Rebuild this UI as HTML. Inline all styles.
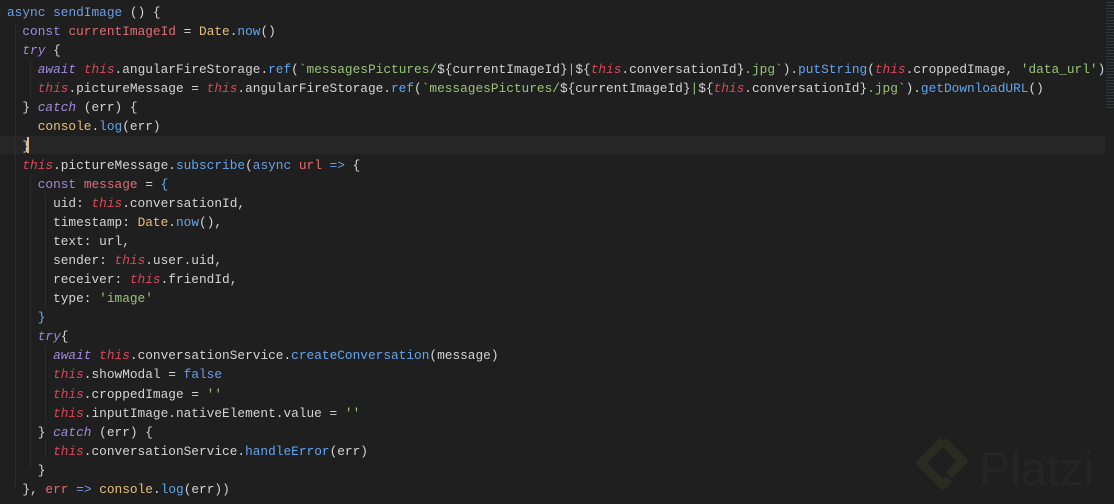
<html><head><style>
body{margin:0;background:#1f1f1f;width:1114px;height:504px;overflow:hidden;position:relative}
pre{margin:0;padding:3px 0 0 7px;font-family:"Liberation Mono",monospace;font-size:12.8px;line-height:19.08px;color:#d4d4d4;position:relative;z-index:2}
.k{color:#a08bdc}.a{color:#6c9fe6}.t{color:#d8475a;font-style:italic}.i{color:#a08bdc;font-style:italic}.v{color:#e06c75}.c{color:#e5c07b}.f{color:#61a6ef}.s{color:#98c379}.b{color:#61afef}.p{color:#d4d4d4}
.hl{position:absolute;left:0;top:136px;width:1105px;height:18px;background:#262626;z-index:1}
.cur{position:absolute;left:27px;top:137px;width:2px;height:16px;background:#e5c07b;z-index:3}
.mm{position:absolute;left:1106px;top:0;width:8px;height:110px;z-index:1;background:repeating-linear-gradient(#1f1f1f 0 2px,#33363c 2px 3px)}
.g{position:absolute;width:1px;background:#2c2c2c;z-index:1}
.logo{position:absolute;left:915px;top:437px;z-index:1}
.pl{position:absolute;left:979px;top:441px;font:47px "Liberation Sans",sans-serif;color:#252525;z-index:1}
</style></head><body>
<div class="hl"></div><div class="cur"></div><div class="mm"></div>
<div class="g" style="left:15px;top:22px;height:465px"></div>
<div class="g" style="left:30px;top:60px;height:38px"></div>
<div class="g" style="left:30px;top:174px;height:295px"></div>
<div class="g" style="left:45px;top:193px;height:115px"></div>
<div class="g" style="left:45px;top:345px;height:76px"></div>
<div class="g" style="left:45px;top:440px;height:19px"></div>
<svg class="logo" width="60" height="62" viewBox="0 0 60 62"><path d="M28 4 L48 24 L34 38 M28 4 L6 26 L28 48 L34 42" fill="none" stroke="#2a2c21" stroke-width="9" stroke-linejoin="round"/></svg>
<div class="pl">Platzi</div>
<pre><span class="a">async</span> <span class="a">sendImage</span> () {
  <span class="k">const</span> <span class="v">currentImageId</span> = <span class="c">Date</span>.<span class="f">now</span>()
  <span class="i">try</span> {
    <span class="i">await</span> <span class="t">this</span>.angularFireStorage.<span class="f">ref</span>(<span class="s">`messagesPictures/</span>${currentImageId}<span class="s">|</span>${<span class="t">this</span>.conversationId}<span class="s">.jpg`</span>).<span class="f">putString</span>(<span class="t">this</span>.croppedImage, <span class="s">'data_url'</span>)
    <span class="t">this</span>.pictureMessage = <span class="t">this</span>.angularFireStorage.<span class="f">ref</span>(<span class="s">`messagesPictures/</span>${currentImageId}<span class="s">|</span>${<span class="t">this</span>.conversationId}<span class="s">.jpg`</span>).<span class="f">getDownloadURL</span>()
  } <span class="i">catch</span> (err) {
    <span class="c">console</span>.<span class="f">log</span>(err)
  }
  <span class="t">this</span>.pictureMessage.<span class="f">subscribe</span>(<span class="a">async</span> <span class="v">url</span> <span class="a">=&gt;</span> {
    <span class="k">const</span> <span class="v">message</span> = <span class="b">{</span>
      uid: <span class="t">this</span>.conversationId,
      timestamp: <span class="c">Date</span>.<span class="f">now</span>(),
      text: url,
      sender: <span class="t">this</span>.user.uid,
      receiver: <span class="t">this</span>.friendId,
      type: <span class="s">'image'</span>
    <span class="b">}</span>
    <span class="i">try</span>{
      <span class="i">await</span> <span class="t">this</span>.conversationService.<span class="f">createConversation</span>(message)
      <span class="t">this</span>.showModal = <span class="a">false</span>
      <span class="t">this</span>.croppedImage = <span class="s">''</span>
      <span class="t">this</span>.inputImage.nativeElement.value = <span class="s">''</span>
    } <span class="i">catch</span> (err) {
      <span class="t">this</span>.conversationService.<span class="f">handleError</span>(err)
    }
  }, <span class="v">err</span> <span class="a">=&gt;</span> <span class="c">console</span>.<span class="f">log</span>(err))</pre>
</body></html>
